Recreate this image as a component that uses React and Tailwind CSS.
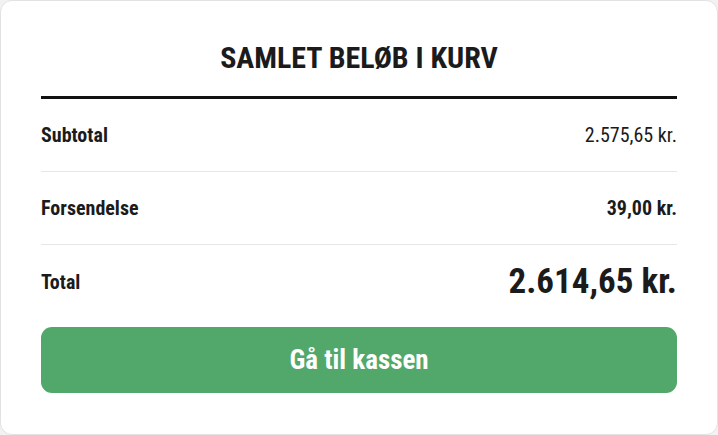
const rows = [
  { label: 'Subtotal', value: '2.575,65 kr.', valueClass: 'font-normal' },
  { label: 'Forsendelse', value: '39,00 kr.', valueClass: 'font-bold' },
];

export default function App() {
  return (
    <div className="min-h-screen bg-[#f2f2f2] font-['Roboto',sans-serif] font-stretch-condensed text-[#1b1b1b]">
      <div className="h-[435px] rounded-[12px] border border-[#e2e2e2] bg-white px-[40px] pt-[36px]">
        <h2 className="text-center text-[30px] font-bold leading-[42px]">SAMLET BELØB I KURV</h2>
        <div className="mt-[17px] h-[3px] bg-[#111]" />

        {rows.map((r) => (
          <div key={r.label} className="flex h-[73px] items-center justify-between border-b border-[#e6e6e6] text-[20px] font-stretch-[85%]">
            <span className="font-bold">{r.label}</span>
            <span className={r.valueClass}>{r.value}</span>
          </div>
        ))}

        <div className="flex h-[74px] items-center justify-between">
          <span className="text-[20px] font-bold font-stretch-[85%]">Total</span>
          <span className="text-[35px] font-bold">2.614,65 kr.</span>
        </div>

        <button className="mt-[8px] h-[66px] w-full rounded-[11px] bg-[#52a86b] text-[27px] font-bold text-white">
          Gå til kassen
        </button>
      </div>
    </div>
  );
}
